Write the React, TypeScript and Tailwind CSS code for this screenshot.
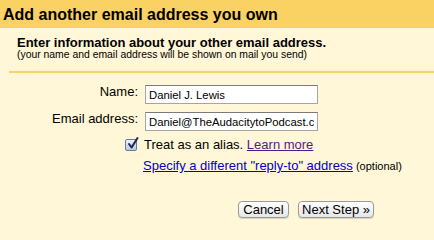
import React from "react";

export default function App() {
  return (
    <div className="w-[434px] h-[240px] bg-[#FFF7D7] overflow-hidden" style={{ fontFamily: '"Liberation Sans", Arial, sans-serif' }}>
      <div className="h-[28px] bg-[#FAD163] flex items-center pl-[3px] pt-[1px]">
        <h1 className="text-[16px] font-bold text-black leading-none">Add another email address you own</h1>
      </div>
      <div className="pl-[9px]">
        <div className="pl-[8px] pt-[8px] pb-[10px]">
          <div className="text-[13px] font-bold leading-[13px] text-black">Enter information about your other email address.</div>
          <div className="text-[10.4px] leading-[12px] text-black">(your name and email address will be shown on mail you send)</div>
        </div>
        <div className="h-[2px] bg-[#FAD163]" />
      </div>
      <div className="pt-[12px] grid grid-cols-[138px_173px] gap-x-[7px] gap-y-[8px] items-start">
        <div className="text-[13px] text-right leading-[16px] -mt-[1px] text-black">Name:</div>
        <input
          readOnly
          value="Daniel J. Lewis"
          className="h-[19px] w-[173px] bg-white border border-[#a5a5a5] border-t-[#7a7a7a] px-[3px] text-[11.3px] text-black outline-none"
          style={{ fontFamily: '"Liberation Sans", Arial, sans-serif' }}
        />
        <div className="text-[13px] text-right leading-[16px] -mt-[1px] text-black">Email address:</div>
        <input
          readOnly
          value="Daniel@TheAudacitytoPodcast.com"
          className="h-[19px] w-[173px] bg-white border border-[#a5a5a5] border-t-[#7a7a7a] px-[3px] text-[11.3px] text-black outline-none"
          style={{ fontFamily: '"Liberation Sans", Arial, sans-serif' }}
        />
      </div>
      <div className="pl-[125px] pt-[6px] flex items-center gap-[7px]">
        <div className="w-[12px] h-[12px] rounded-[2px] border border-[#6b7b9c] bg-gradient-to-b from-[#eef2fb] to-[#b9c9e6] relative shrink-0">
          <svg viewBox="0 0 12 12" className="absolute left-[1px] -top-[2px] w-[12px] h-[12px] overflow-visible">
            <path d="M2 6 L4.6 9.5 L10.5 0" fill="none" stroke="#1b2a4a" strokeWidth="2" strokeLinecap="round" strokeLinejoin="round" />
          </svg>
        </div>
        <div className="text-[13px] leading-[16px] text-black">
          Treat as an alias. <span className="text-[#551A8B] underline">Learn more</span>
        </div>
      </div>
      <div className="pl-[143px] pt-[5px] text-[13px] leading-[16px]">
        <span className="text-[#0000CC] underline">Specify a different "reply-to" address</span>
        <span className="text-[11px] text-black"> (optional)</span>
      </div>
      <div className="pl-[238px] pt-[27px] flex gap-[9px]">
        <button className="h-[17px] w-[51px] rounded-[4px] border border-[#9a9a9a] bg-gradient-to-b from-white to-[#e6e6e6] text-[13px] leading-none text-black shadow-[0_1px_1px_rgba(0,0,0,0.15)]">Cancel</button>
        <button className="h-[17px] w-[76px] rounded-[4px] border border-[#9a9a9a] bg-gradient-to-b from-white to-[#e6e6e6] text-[13px] leading-none text-black shadow-[0_1px_1px_rgba(0,0,0,0.15)]">Next Step »</button>
      </div>
    </div>
  );
}
